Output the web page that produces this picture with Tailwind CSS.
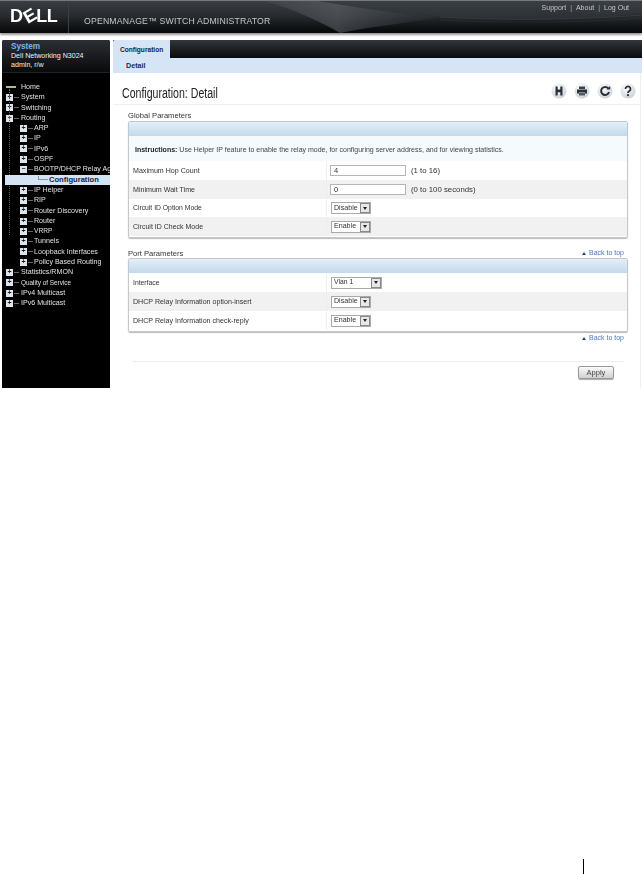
<!DOCTYPE html>
<html lang="en">
<head>
<meta charset="utf-8">
<title>Configuration: Detail</title>
<script src="https://cdn.jsdelivr.net/npm/@tailwindcss/browser@4"></script>
</head>
<body class="bg-white font-['Liberation_Sans',sans-serif] overflow-hidden">
<div class="w-[642px] h-[874px] flex flex-col">
  <div class="h-[388px] flex flex-col blur-[0.4px]">
    <!-- Header -->
    <header class="relative h-[33px] mb-[1px] shrink-0 flex items-start border-t border-[#777b80] bg-gradient-to-b from-[#3a3e43] via-[#26292d] to-[#060708] shadow-[0_2px_2px_#999] overflow-hidden">
      <svg class="absolute inset-0" width="642" height="34" viewBox="0 0 642 34" fill="none">
        <defs><linearGradient id="s" x1="0" y1="0" x2="1" y2="0"><stop offset="0" stop-color="#5c6066" stop-opacity=".25"/><stop offset=".4" stop-color="#6a6f75" stop-opacity=".5"/><stop offset="1" stop-color="#4a4f55" stop-opacity=".05"/></linearGradient></defs>
        <path d="M265 0 L318 0 C360 7 400 13 445 16 C420 20 375 25 340 32 C320 20 290 7 265 0Z" fill="url(#s)"/>
        <path d="M318 0 C370 9 430 17 500 18 C560 19 610 16 642 12 L642 0Z" fill="#3d4349" opacity=".35"/>
        <path d="M440 16 C500 20 580 19 642 14" stroke="#6a6f75" stroke-width=".6" opacity=".4"/>
        <path d="M440 19 C500 22 580 22 642 17" stroke="#6a6f75" stroke-width=".5" opacity=".25"/>
      </svg>
      <div class="relative flex items-center h-[32px] pb-[3px] pl-[10px] w-[69px] border-r border-[#3c4044]">
        <span class="text-white font-bold text-[18px] leading-none tracking-[-0.4px] flex items-center">D<span class="inline-block mx-[1px] -rotate-30 origin-center">E</span>LL</span>
      </div>
      <div class="relative pl-[15px] pt-[15px] text-[8.7px] leading-[10px] tracking-[0.18px] text-[#c4c7ca] whitespace-nowrap">OPENMANAGE™ SWITCH ADMINISTRATOR</div>
      <nav class="relative ml-auto pr-[13px] pt-[2px] flex gap-[4px] text-[7px] leading-[9px] text-[#c4c8cc]">
        <span>Support</span><span class="text-[#9aa]">|</span><span>About</span><span class="text-[#9aa]">|</span><span>Log Out</span>
      </nav>
    </header>

    <div class="flex flex-1 pt-[6px] min-h-0">
      <!-- Sidebar -->
      <aside class="w-[108px] ml-[2px] shrink-0 bg-black rounded-t-[2px] overflow-hidden flex flex-col">
        <div class="h-[33px] bg-gradient-to-b from-[#2c3036] to-[#090a0b] pl-[9px] pt-[2px] text-[7.1px] leading-[9.5px] border-b border-[#222]">
          <div class="font-bold text-[#78b6f2] text-[8.2px]">System</div>
          <div class="text-[#f0f0f0]">Dell Networking N3024</div>
          <div class="text-[#f0f0f0]">admin, r/w</div>
        </div>
        <div class="relative pt-[9px] text-[7.1px] text-[#e0e0e0] leading-[10.3px] whitespace-nowrap">
          <div class="absolute left-[7px] top-[16px] h-[146px] border-l border-dotted border-[#666]"></div>
          <div class="flex items-center h-[10.3px] pl-[4px]"><span class="w-[10px] h-[2px] bg-[#a8c090] shrink-0"></span><span class="ml-[5px]">Home</span></div>
          <div class="flex items-center h-[10.3px] pl-[4px]"><span class="w-[7px] h-[7px] bg-[#dfe4ea] text-[#123] text-[7px] leading-[6px] text-center font-bold shrink-0">+</span><span class="w-[5px] h-px bg-[#666] mx-[1px] shrink-0"></span><span class="ml-[1px]">System</span></div>
          <div class="flex items-center h-[10.3px] pl-[4px]"><span class="w-[7px] h-[7px] bg-[#dfe4ea] text-[#123] text-[7px] leading-[6px] text-center font-bold shrink-0">+</span><span class="w-[5px] h-px bg-[#666] mx-[1px] shrink-0"></span><span class="ml-[1px]">Switching</span></div>
          <div class="flex items-center h-[10.3px] pl-[4px]"><span class="w-[7px] h-[7px] bg-[#dfe4ea] text-[#123] text-[7px] leading-[6px] text-center font-bold shrink-0">−</span><span class="w-[5px] h-px bg-[#666] mx-[1px] shrink-0"></span><span class="ml-[1px]">Routing</span></div>
          <div class="flex items-center h-[10.3px] pl-[18px]"><span class="w-[7px] h-[7px] bg-[#dfe4ea] text-[#123] text-[7px] leading-[6px] text-center font-bold shrink-0">+</span><span class="w-[5px] h-px bg-[#666] mx-[1px] shrink-0"></span><span>ARP</span></div>
          <div class="flex items-center h-[10.3px] pl-[18px]"><span class="w-[7px] h-[7px] bg-[#dfe4ea] text-[#123] text-[7px] leading-[6px] text-center font-bold shrink-0">+</span><span class="w-[5px] h-px bg-[#666] mx-[1px] shrink-0"></span><span>IP</span></div>
          <div class="flex items-center h-[10.3px] pl-[18px]"><span class="w-[7px] h-[7px] bg-[#dfe4ea] text-[#123] text-[7px] leading-[6px] text-center font-bold shrink-0">+</span><span class="w-[5px] h-px bg-[#666] mx-[1px] shrink-0"></span><span>IPv6</span></div>
          <div class="flex items-center h-[10.3px] pl-[18px]"><span class="w-[7px] h-[7px] bg-[#dfe4ea] text-[#123] text-[7px] leading-[6px] text-center font-bold shrink-0">+</span><span class="w-[5px] h-px bg-[#666] mx-[1px] shrink-0"></span><span>OSPF</span></div>
          <div class="flex items-center h-[10.3px] pl-[18px]"><span class="w-[7px] h-[7px] bg-[#dfe4ea] text-[#123] text-[7px] leading-[6px] text-center font-bold shrink-0">−</span><span class="w-[5px] h-px bg-[#666] mx-[1px] shrink-0"></span><span>BOOTP/DHCP Relay Age</span></div>
          <div class="relative flex items-center h-[10.3px] ml-[3px] pl-[44px] bg-[#d5e4f4] text-[#12233f] font-bold text-[7.6px]"><span class="absolute left-[33px] top-[1px] w-[10px] h-[4px] border-l border-b border-[#8a97a8]"></span>Configuration</div>
          <div class="flex items-center h-[10.3px] pl-[18px]"><span class="w-[7px] h-[7px] bg-[#dfe4ea] text-[#123] text-[7px] leading-[6px] text-center font-bold shrink-0">+</span><span class="w-[5px] h-px bg-[#666] mx-[1px] shrink-0"></span><span>IP Helper</span></div>
          <div class="flex items-center h-[10.3px] pl-[18px]"><span class="w-[7px] h-[7px] bg-[#dfe4ea] text-[#123] text-[7px] leading-[6px] text-center font-bold shrink-0">+</span><span class="w-[5px] h-px bg-[#666] mx-[1px] shrink-0"></span><span>RIP</span></div>
          <div class="flex items-center h-[10.3px] pl-[18px]"><span class="w-[7px] h-[7px] bg-[#dfe4ea] text-[#123] text-[7px] leading-[6px] text-center font-bold shrink-0">+</span><span class="w-[5px] h-px bg-[#666] mx-[1px] shrink-0"></span><span>Router Discovery</span></div>
          <div class="flex items-center h-[10.3px] pl-[18px]"><span class="w-[7px] h-[7px] bg-[#dfe4ea] text-[#123] text-[7px] leading-[6px] text-center font-bold shrink-0">+</span><span class="w-[5px] h-px bg-[#666] mx-[1px] shrink-0"></span><span>Router</span></div>
          <div class="flex items-center h-[10.3px] pl-[18px]"><span class="w-[7px] h-[7px] bg-[#dfe4ea] text-[#123] text-[7px] leading-[6px] text-center font-bold shrink-0">+</span><span class="w-[5px] h-px bg-[#666] mx-[1px] shrink-0"></span><span class="text-[6.6px]">VRRP</span></div>
          <div class="flex items-center h-[10.3px] pl-[18px]"><span class="w-[7px] h-[7px] bg-[#dfe4ea] text-[#123] text-[7px] leading-[6px] text-center font-bold shrink-0">+</span><span class="w-[5px] h-px bg-[#666] mx-[1px] shrink-0"></span><span>Tunnels</span></div>
          <div class="flex items-center h-[10.3px] pl-[18px]"><span class="w-[7px] h-[7px] bg-[#dfe4ea] text-[#123] text-[7px] leading-[6px] text-center font-bold shrink-0">+</span><span class="w-[5px] h-px bg-[#666] mx-[1px] shrink-0"></span><span>Loopback Interfaces</span></div>
          <div class="flex items-center h-[10.3px] pl-[18px]"><span class="w-[7px] h-[7px] bg-[#dfe4ea] text-[#123] text-[7px] leading-[6px] text-center font-bold shrink-0">+</span><span class="w-[5px] h-px bg-[#666] mx-[1px] shrink-0"></span><span>Policy Based Routing</span></div>
          <div class="flex items-center h-[10.3px] pl-[4px]"><span class="w-[7px] h-[7px] bg-[#dfe4ea] text-[#123] text-[7px] leading-[6px] text-center font-bold shrink-0">+</span><span class="w-[5px] h-px bg-[#666] mx-[1px] shrink-0"></span><span class="ml-[1px]">Statistics/RMON</span></div>
          <div class="flex items-center h-[10.3px] pl-[4px]"><span class="w-[7px] h-[7px] bg-[#dfe4ea] text-[#123] text-[7px] leading-[6px] text-center font-bold shrink-0">+</span><span class="w-[5px] h-px bg-[#666] mx-[1px] shrink-0"></span><span class="ml-[1px] text-[6.4px]">Quality of Service</span></div>
          <div class="flex items-center h-[10.3px] pl-[4px]"><span class="w-[7px] h-[7px] bg-[#dfe4ea] text-[#123] text-[7px] leading-[6px] text-center font-bold shrink-0">+</span><span class="w-[5px] h-px bg-[#666] mx-[1px] shrink-0"></span><span class="ml-[1px]">IPv4 Multicast</span></div>
          <div class="flex items-center h-[10.3px] pl-[4px]"><span class="w-[7px] h-[7px] bg-[#dfe4ea] text-[#123] text-[7px] leading-[6px] text-center font-bold shrink-0">+</span><span class="w-[5px] h-px bg-[#666] mx-[1px] shrink-0"></span><span class="ml-[1px]">IPv6 Multicast</span></div>
        </div>
      </aside>

      <!-- Main -->
      <main class="ml-[3px] flex-1 min-w-0 flex flex-col">
        <div class="h-[18px] flex bg-gradient-to-b from-[#33373c] to-[#0a0b0c]">
          <div class="w-[57px] h-[18px] bg-[#d5e5f6] rounded-tl-[2px] text-[6.6px] font-bold text-[#1a2438] pl-[7px] pt-[5px] leading-[9px]">Configuration</div>
        </div>
        <div class="h-[15px] bg-[#d5e5f6] text-[7.2px] font-bold text-[#1a2e55] pl-[13px] pt-[3px] leading-[9px]">Detail</div>
        <div class="flex-1 border-r border-[#eeeeee] mr-[1px] flex flex-col min-h-0">
          <div class="h-[32px] shrink-0 flex items-start border-b border-[#eeeeee] pl-[9px]">
            <h1 class="pt-[12px] text-[14px] leading-[16px] text-[#222] whitespace-nowrap origin-left scale-x-[0.755]">Configuration: Detail</h1>
            <div class="ml-auto mr-[4px] mt-[10px] flex gap-[7px]">
              <svg width="16" height="17" viewBox="0 0 16 17"><defs><radialGradient id="b" cx=".4" cy=".3" r=".8"><stop offset="0" stop-color="#fff"/><stop offset="1" stop-color="#c4ccd4"/></radialGradient></defs><circle cx="8" cy="8" r="7.5" fill="url(#b)"/><path d="M4.500 3.500h2.200v3h2.600v-3h2.200v9H9.300V9.200H6.700v3.300H4.500Z" fill="#2b3038"/></svg>
              <svg width="16" height="17" viewBox="0 0 16 17"><circle cx="8" cy="8" r="7.5" fill="url(#b)"/><path d="M5 3.500h6v2.500H5Z" fill="#3a3f47"/><path d="M3 6.500h10v4h-2V9.500H5v1H3Z" fill="#2b3038"/><path d="M5 10h6v2.500H5Z" fill="#555b63"/></svg>
              <svg width="16" height="17" viewBox="0 0 16 17"><circle cx="8" cy="8" r="7.5" fill="url(#b)"/><path d="M11.300 5.500A4 4 0 1 0 12 9" fill="none" stroke="#2b3038" stroke-width="2"/><path d="M9.500 6.500h3.700V3Z" fill="#2b3038"/></svg>
              <svg width="16" height="17" viewBox="0 0 16 17"><circle cx="8" cy="8" r="7.500" fill="url(#b)"/><path d="M5.500 6a2.500 2.500 0 1 1 3.800 2.100C8.500 8.600 8 9 8 10" fill="none" stroke="#2b3038" stroke-width="1.800"/><circle cx="8" cy="12.200" r="1.100" fill="#2b3038"/></svg>
            </div>
          </div>

          <div class="pl-[15px] pr-[12px] pt-[6px] text-[7.1px] text-[#333]">
            <div class="h-[10px] text-[7.6px] leading-[10px] text-[#333]">Global Parameters</div>
            <section class="border border-[#c4c8cc] rounded-[2px] shadow-[0_1px_1px_#bbb] h-[117px]">
              <div class="h-[14px] bg-gradient-to-b from-[#e4eff8] to-[#c3d9ec]"></div>
              <div class="h-[25px] bg-[#f5fafd] pl-[6px] pt-[9px] leading-[9px] text-[7px] text-[#444]"><b class="text-[#222]">Instructions:</b> Use Helper IP feature to enable the relay mode, for configuring server address, and for viewing statistics.</div>
              <div class="h-[19px] flex items-center"><div class="w-[198px] pl-[4px] pt-[1px] border-r border-[#eee] self-stretch flex items-center">Maximum Hop Count</div><input value="4" class="ml-[3px] w-[76px] h-[11px] px-[3px] text-[7.5px] border border-[#b5b5b5] bg-white" readonly><span class="ml-[5px] text-[7.8px]">(1 to 16)</span></div>
              <div class="h-[19px] flex items-center bg-[#f1f1f1]"><div class="w-[198px] pl-[4px] pt-[1px] border-r border-[#eee] self-stretch flex items-center">Minimum Wait Time</div><input value="0" class="ml-[3px] w-[76px] h-[11px] px-[3px] text-[7.5px] border border-[#b5b5b5] bg-white" readonly><span class="ml-[5px] text-[7.8px]">(0 to 100 seconds)</span></div>
              <div class="h-[18px] flex items-center"><div class="w-[198px] pl-[4px] pt-[1px] border-r border-[#eee] self-stretch flex items-center text-[6.8px]">Circuit ID Option Mode</div><div class="ml-[4px] flex items-center h-[12px] w-[40px] border border-[#aaa] bg-white pl-[2px]"><span class="flex-1">Disable</span><span class="w-[10px] h-[10px] border border-[#888] bg-[#e8e8e8] flex items-center justify-center"><span class="border-x-[2.5px] border-x-transparent border-t-[3px] border-t-[#222]"></span></span></div></div>
              <div class="h-[19px] flex items-center bg-[#f1f1f1]"><div class="w-[198px] pl-[4px] pt-[1px] border-r border-[#eee] self-stretch flex items-center text-[7px]">Circuit ID Check Mode</div><div class="ml-[4px] flex items-center h-[12px] w-[40px] border border-[#aaa] bg-white pl-[2px]"><span class="flex-1">Enable</span><span class="w-[10px] h-[10px] border border-[#888] bg-[#e8e8e8] flex items-center justify-center"><span class="border-x-[2.5px] border-x-transparent border-t-[3px] border-t-[#222]"></span></span></div></div>
            </section>

            <div class="mt-[11px] h-[9px] flex items-center justify-between pr-[4px]">
              <span class="text-[7.6px] leading-[10px]">Port Parameters</span>
              <a class="flex items-center gap-[3px] text-[7px] text-[#4a78b8]"><span class="border-x-[2.5px] border-x-transparent border-b-[3px] border-b-[#26456e]"></span>Back to top</a>
            </div>
            <section class="border border-[#c4c8cc] rounded-[2px] shadow-[0_1px_1px_#bbb] h-[74px]">
              <div class="h-[14px] bg-gradient-to-b from-[#e4eff8] to-[#c3d9ec]"></div>
              <div class="h-[19px] flex items-center"><div class="w-[198px] pl-[4px] pt-[1px] border-r border-[#eee] self-stretch flex items-center text-[6.8px]">Interface</div><div class="ml-[4px] flex items-center h-[12px] w-[51px] border border-[#aaa] bg-white pl-[2px] text-[6.8px]"><span class="flex-1">Vlan 1</span><span class="w-[10px] h-[10px] border border-[#888] bg-[#e8e8e8] flex items-center justify-center"><span class="border-x-[2.5px] border-x-transparent border-t-[3px] border-t-[#222]"></span></span></div></div>
              <div class="h-[19px] flex items-center bg-[#f1f1f1]"><div class="w-[198px] pl-[4px] pt-[1px] border-r border-[#eee] self-stretch flex items-center">DHCP Relay Information option-insert</div><div class="ml-[4px] flex items-center h-[12px] w-[40px] border border-[#aaa] bg-white pl-[2px]"><span class="flex-1">Disable</span><span class="w-[10px] h-[10px] border border-[#888] bg-[#e8e8e8] flex items-center justify-center"><span class="border-x-[2.5px] border-x-transparent border-t-[3px] border-t-[#222]"></span></span></div></div>
              <div class="h-[19px] flex items-center"><div class="w-[198px] pl-[4px] pt-[1px] border-r border-[#eee] self-stretch flex items-center">DHCP Relay Information check-reply</div><div class="ml-[4px] flex items-center h-[12px] w-[40px] border border-[#aaa] bg-white pl-[2px]"><span class="flex-1">Enable</span><span class="w-[10px] h-[10px] border border-[#888] bg-[#e8e8e8] flex items-center justify-center"><span class="border-x-[2.5px] border-x-transparent border-t-[3px] border-t-[#222]"></span></span></div></div>
            </section>
            <div class="mt-[2px] h-[9px] flex justify-end pr-[4px]">
              <a class="flex items-center gap-[3px] text-[7px] text-[#4a78b8]"><span class="border-x-[2.5px] border-x-transparent border-b-[3px] border-b-[#26456e]"></span>Back to top</a>
            </div>
            <div class="mt-[18px] ml-[4px] mr-[4px] border-t border-[#eeeeee] pt-[4px] flex justify-end">
              <button class="mr-[10px] w-[36px] h-[13px] border border-[#999] rounded-[2px] bg-gradient-to-b from-[#fafafa] to-[#d0d0d0] text-[7.5px] leading-[10px] text-[#444] shadow-[0_1px_1px_#aaa]">Apply</button>
            </div>
          </div>
        </div>
      </main>
    </div>
  </div>
  <!-- Printed page margin rule -->
  <div class="mt-[471px] ml-[583px] w-px h-[15px] bg-black"></div>
</div>
</body>
</html>
